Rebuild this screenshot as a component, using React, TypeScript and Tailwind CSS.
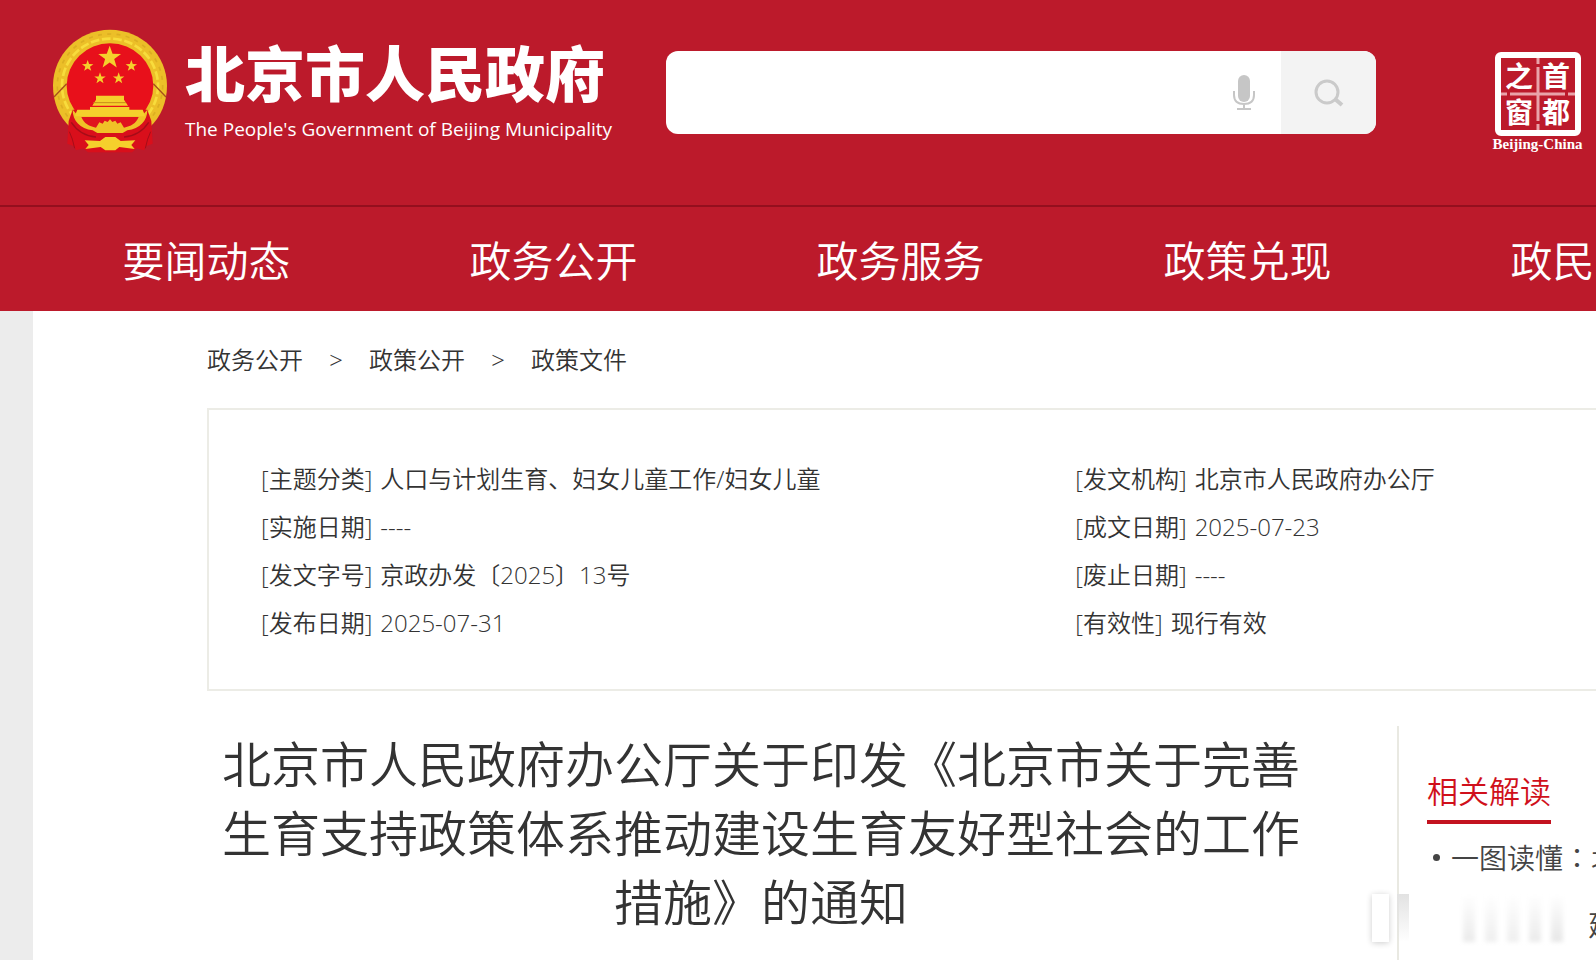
const NAV = ["要闻动态", "政务公开", "政务服务", "政策兑现", "政民互动"]

const CRUMBS = ["政务公开", "政策公开", "政策文件"]

const INFO = [
	["主题分类", "人口与计划生育、妇女儿童工作/妇女儿童"],
	["发文机构", "北京市人民政府办公厅"],
	["实施日期", "----"],
	["成文日期", "2025-07-23"],
	["发文字号", "京政办发〔2025〕13号"],
	["废止日期", "----"],
	["发布日期", "2025-07-31"],
	["有效性", "现行有效"],
]

const STAR = "M0 -10 L2.4 -3.2 L9.5 -3.1 L3.8 1.2 L5.9 8.1 L0 4 L-5.9 8.1 L-3.8 1.2 L-9.5 -3.1 L-2.4 -3.2 Z"

const Emblem = () => {
	return (
		<svg className="h-[124px] w-[116px] shrink-0" viewBox="36 42 348 372" aria-hidden="true">
			<path d="M210 44 C306 44 381 120 381 212 C381 262 362 306 330 336 H90 C58 306 39 262 39 212 C39 120 114 44 210 44 Z" fill="#ecbf28" />
			<ellipse cx="210" cy="212" rx="158" ry="155" fill="none" stroke="#dcae22" strokeWidth="5" strokeDasharray="12 16" />
			<ellipse cx="210" cy="212" rx="144" ry="141" fill="none" stroke="#f8dc3c" strokeWidth="8" strokeDasharray="26 8" />
			<path d="M42 246 L80 206 M378 246 L340 206" stroke="#a8501c" strokeWidth="4" />
			<ellipse cx="210" cy="212" rx="130" ry="127" fill="#e8101b" />
			<path d="M86 318 L98 284 H322 L334 318 L338 386 L318 394 L312 406 L290 400 L276 412 L144 412 L130 400 L108 406 L102 394 L82 386 Z" fill="#d90f1b" />
			<path d="M98 284 L112 300 H308 L322 284 C322 318 300 340 262 346 L248 354 H172 L158 346 C120 340 98 318 98 284 Z" fill="#f0c127" />
			<path d="M124 306 H296 C288 326 272 334 252 338 L242 322 L232 326 L226 317 L217 321 L210 313 L203 321 L194 317 L188 326 L178 322 L168 338 C148 334 132 326 124 306 Z" fill="#e0131e" />
			<g fill="#f5d02c">
				<path d={STAR} transform="translate(209 128) scale(3.6)" />
				<path d={STAR} transform="translate(143 153) scale(1.8)" />
				<path d={STAR} transform="translate(274 153) scale(1.8)" />
				<path d={STAR} transform="translate(180 190) scale(1.8)" />
				<path d={STAR} transform="translate(236 190) scale(1.8)" />
				<path d="M168 242 H252 V254 L264 272 H157 L168 254 Z" />
				<path d="M150 276 H268 V284 H308 L316 304 H104 L112 284 H150 Z" />
				<path d="M134 376 L180 378 L196 366 H226 L242 378 L286 376 L274 390 L284 402 L238 396 L226 406 H196 L182 396 L136 402 L146 390 Z" />
			</g>
			<path d="M160 263 H258" stroke="#c98a18" strokeWidth="3" />
			<path d="M94 322 Q120 362 168 366 M326 322 Q300 362 252 366" fill="none" stroke="#a50d18" strokeWidth="4" />
			<path d="M88 350 Q98 370 104 400 M332 350 Q322 370 316 400" fill="none" stroke="#a50d18" strokeWidth="3" />
		</svg>
	)
}

const Seal = () => {
	return (
		<a href="#" className="flex w-[93px] shrink-0 flex-col items-center text-white">
			<span className="relative grid h-[84px] w-[86px] grid-cols-2 grid-rows-2 place-items-center rounded-md border-[6px] border-white text-[28px] leading-7 font-bold">
				<span>之</span>
				<span>首</span>
				<span>窗</span>
				<span>都</span>
				<svg className="absolute inset-0 h-full w-full" viewBox="0 0 74 72" stroke="#e9a3aa" strokeWidth="3" aria-hidden="true">
					<path d="M37 0 V6 M37 9 V63 M37 66 V72 M0 36 H6 M9 36 H64 M67 36 H74" />
				</svg>
			</span>
			<span className="font-['Liberation_Serif',serif] text-[15px] leading-4 font-bold">Beijing-China</span>
		</a>
	)
}

const Search = () => {
	return (
		<form className="flex h-[83px] min-w-0 flex-1 overflow-hidden rounded-xl bg-white">
			<input type="text" aria-label="搜索" className="min-w-0 flex-1 px-6 text-2xl text-[#333] outline-none" />
			<button type="button" aria-label="语音" className="flex w-[74px] items-center justify-center">
				<svg className="h-9 w-[22px]" viewBox="0 0 22 36" fill="none" stroke="#c6c6c6" strokeWidth="2" aria-hidden="true">
					<rect x="5" y="0" width="12" height="27" rx="6" fill="#c6c6c6" stroke="none" />
					<path d="M1 16 V20 C1 26 5 29 11 29 C17 29 21 26 21 20 V16 M11 29 V34 M4 34 H18" />
				</svg>
			</button>
			<button type="submit" aria-label="搜索" className="flex w-[95px] items-center justify-center bg-[#f3f3f3]">
				<svg className="h-7 w-[30px]" viewBox="0 0 30 28" fill="none" stroke="#cacaca" strokeWidth="3" aria-hidden="true">
					<ellipse cx="13" cy="13" rx="11" ry="11" />
					<path d="M21 20 L28 26" strokeWidth="4" />
				</svg>
			</button>
		</form>
	)
}

const Header = () => {
	return (
		<header className="bg-[#bc1a2b] text-white">
			<div className="flex h-[205px] items-start pr-3 pl-[52px]">
				<a href="#" className="mt-[29px] flex shrink-0 gap-[17px]">
					<Emblem />
					<span className="flex flex-col pt-3">
						<strong className="text-[60px] leading-[66px] font-black">北京市人民政府</strong>
						<span className="mt-1.5 font-['Open_Sans',sans-serif] text-[19px] leading-8 font-normal">
							The People's Government of Beijing Municipality
						</span>
					</span>
				</a>
				<div className="mt-[51px] mr-[115px] ml-[54px] flex min-w-0 flex-1">
					<Search />
				</div>
				<div className="mt-[52px]">
					<Seal />
				</div>
			</div>
			<nav className="flex h-[106px] overflow-hidden border-t-2 border-[#940f1e] pt-0.5 pl-[33px]">
				{NAV.map((item) => (
					<a key={item} href="#" className="flex w-[347px] shrink-0 items-center justify-center text-[42px]">
						{item}
					</a>
				))}
			</nav>
		</header>
	)
}

const Related = () => {
	return (
		<aside className="w-[199px] shrink-0 overflow-hidden border-l-2 border-[#e9e9e2] pt-[41px] pl-7 whitespace-nowrap">
			<h2 className="inline-block border-b-4 border-[#c3121f] pb-1 text-[31px] leading-[49px] text-[#d0101b]">相关解读</h2>
			<ul className="text-[28px] leading-[67px] text-[#444]">
				<li className="relative pl-6">
					<span className="absolute top-[30px] left-1.5 h-[7px] w-[7px] rounded-full bg-[#444]" />
					<a href="#">
						一图读懂<span className="font-['Noto_Sans_CJK_TC',sans-serif]">：</span>北京市关于
						<span className="block pl-[137px]">建设生育友好型社会</span>
					</a>
				</li>
			</ul>
		</aside>
	)
}

// faded strip lying over the lower corner of the page
const Strip = () => {
	return (
		<div className="absolute right-2 bottom-[18px] flex h-12 w-[224px]" aria-hidden="true">
			<span className="ml-2 w-[17px] bg-white shadow-[0_1px_6px_rgba(0,0,0,0.2)]" />
			<span className="ml-2 w-3 bg-linear-to-b from-[#e2e2e2] to-white/0" />
			<span className="ml-[54px] w-3 bg-linear-to-b from-white to-[#ebebeb] blur-[2px]" />
			<span className="ml-2.5 w-3 bg-linear-to-b from-white to-[#efefef] blur-[2px]" />
			<span className="ml-2.5 w-3 bg-linear-to-b from-white to-[#efefef] blur-[2px]" />
			<span className="ml-2.5 w-3 bg-linear-to-b from-white to-[#ebebeb] blur-[2px]" />
			<span className="ml-2.5 w-3 bg-linear-to-b from-white to-[#e7e7e7] blur-[2px]" />
		</div>
	)
}

export default function App() {
	return (
		<div className="relative flex h-screen flex-col overflow-hidden bg-[#ececec] font-['Open_Sans','Noto_Sans_CJK_SC',sans-serif] font-[350] text-[#333]">
			<Header />
			<main className="ml-[33px] flex flex-1 flex-col bg-white pl-[174px]">
				<nav className="flex h-[97px] shrink-0 items-center text-2xl">
					{CRUMBS.map((crumb, i) => (
						<div key={crumb} className="flex">
							{i > 0 && <span className="w-[66px] text-center font-['Liberation_Serif',serif]">&gt;</span>}
							<a href="#">{crumb}</a>
						</div>
					))}
				</nav>
				<dl className="grid shrink-0 grid-cols-[61%_1fr] border-y-2 border-l-2 border-[#ecece6] pt-[45px] pb-[42px] pl-[52px] text-2xl leading-[48px]">
					{INFO.map(([label, value]) => (
						<div key={label} className="flex gap-2 whitespace-nowrap">
							<dt>[{label}]</dt>
							<dd>{value}</dd>
						</div>
					))}
				</dl>
				<div className="flex flex-1 pt-[35px]">
					<article className="min-w-0 flex-1 pr-[82px]">
						<h1 className="pt-1 text-center text-[49px] leading-[69px]">
							北京市人民政府办公厅关于印发《北京市关于完善生育支持政策体系推动建设生育友好型社会的工作措施》的通知
						</h1>
					</article>
					<Related />
				</div>
			</main>
			<Strip />
		</div>
	)
}
